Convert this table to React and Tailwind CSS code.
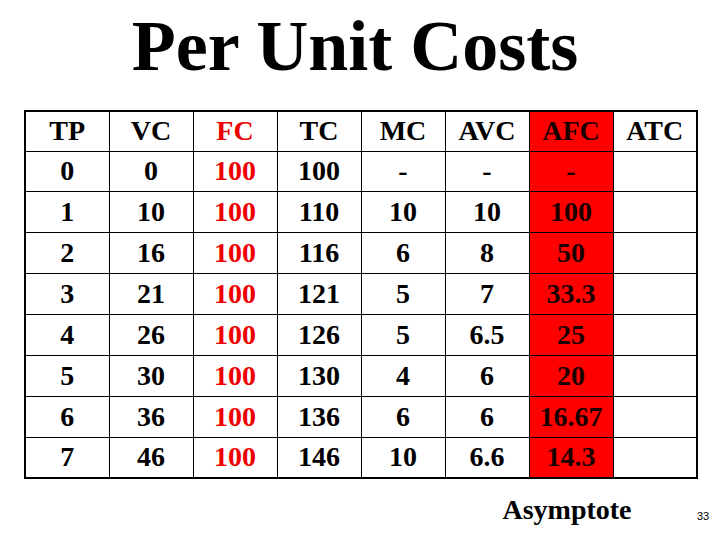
import React from 'react';

// Per-unit cost table slide
const headers = ['TP', 'VC', 'FC', 'TC', 'MC', 'AVC', 'AFC', 'ATC'];

const rows = [
  ['0', '0', '100', '100', '-', '-', '-', ''],
  ['1', '10', '100', '110', '10', '10', '100', ''],
  ['2', '16', '100', '116', '6', '8', '50', ''],
  ['3', '21', '100', '121', '5', '7', '33.3', ''],
  ['4', '26', '100', '126', '5', '6.5', '25', ''],
  ['5', '30', '100', '130', '4', '6', '20', ''],
  ['6', '36', '100', '136', '6', '6', '16.67', ''],
  ['7', '46', '100', '146', '10', '6.6', '14.3', ''],
];

const cellClass = (col) => {
  if (col === 2) return 'text-[#ee0000]';
  if (col === 6) return 'bg-[#ff0000] text-[#1a0000]';
  return 'text-black';
};

export default function App() {
  return (
    <div
      className="w-[720px] h-[540px] bg-white overflow-hidden"
      style={{ fontFamily: '"Liberation Serif", "Times New Roman", serif' }}
    >
      {/* Title */}
      <div className="pt-[6px] h-[86px] flex justify-center pr-[10px]">
        <h1 className="text-[72px] leading-[80px] font-bold text-black">Per Unit Costs</h1>
      </div>

      {/* Table */}
      <div className="mt-[24px] ml-[24px] w-[672px]">
        <table className="w-[672px] table-fixed border-collapse border-2 border-black">
          <thead>
            <tr className="h-[40px]">
              {headers.map((h, i) => (
                <th
                  key={h}
                  className={`w-[84px] border border-black p-0 text-[28px] leading-none font-bold text-center ${cellClass(i)}`}
                >
                  {h}
                </th>
              ))}
            </tr>
          </thead>
          <tbody>
            {rows.map((row, r) => (
              <tr key={r} className="h-[40.9px]">
                {row.map((v, c) => (
                  <td
                    key={c}
                    className={`border border-black p-0 text-[28px] leading-none font-bold text-center ${cellClass(c)}`}
                  >
                    {v}
                  </td>
                ))}
              </tr>
            ))}
          </tbody>
        </table>
      </div>

      {/* Footer: asymptote label and slide number */}
      <div className="mt-[15px] ml-[24px] flex items-end">
        <div className="w-[672px] grid grid-cols-8">
          <div className="col-start-7 flex justify-center whitespace-nowrap pr-[6px]">
            <span className="text-[28px] leading-[32px] font-bold text-black">Asymptote</span>
          </div>
        </div>
        <span
          className="ml-[1px] mb-[4px] text-[11px] leading-none text-black"
          style={{ fontFamily: '"Liberation Sans", Arial, sans-serif' }}
        >
          33
        </span>
      </div>
    </div>
  );
}
